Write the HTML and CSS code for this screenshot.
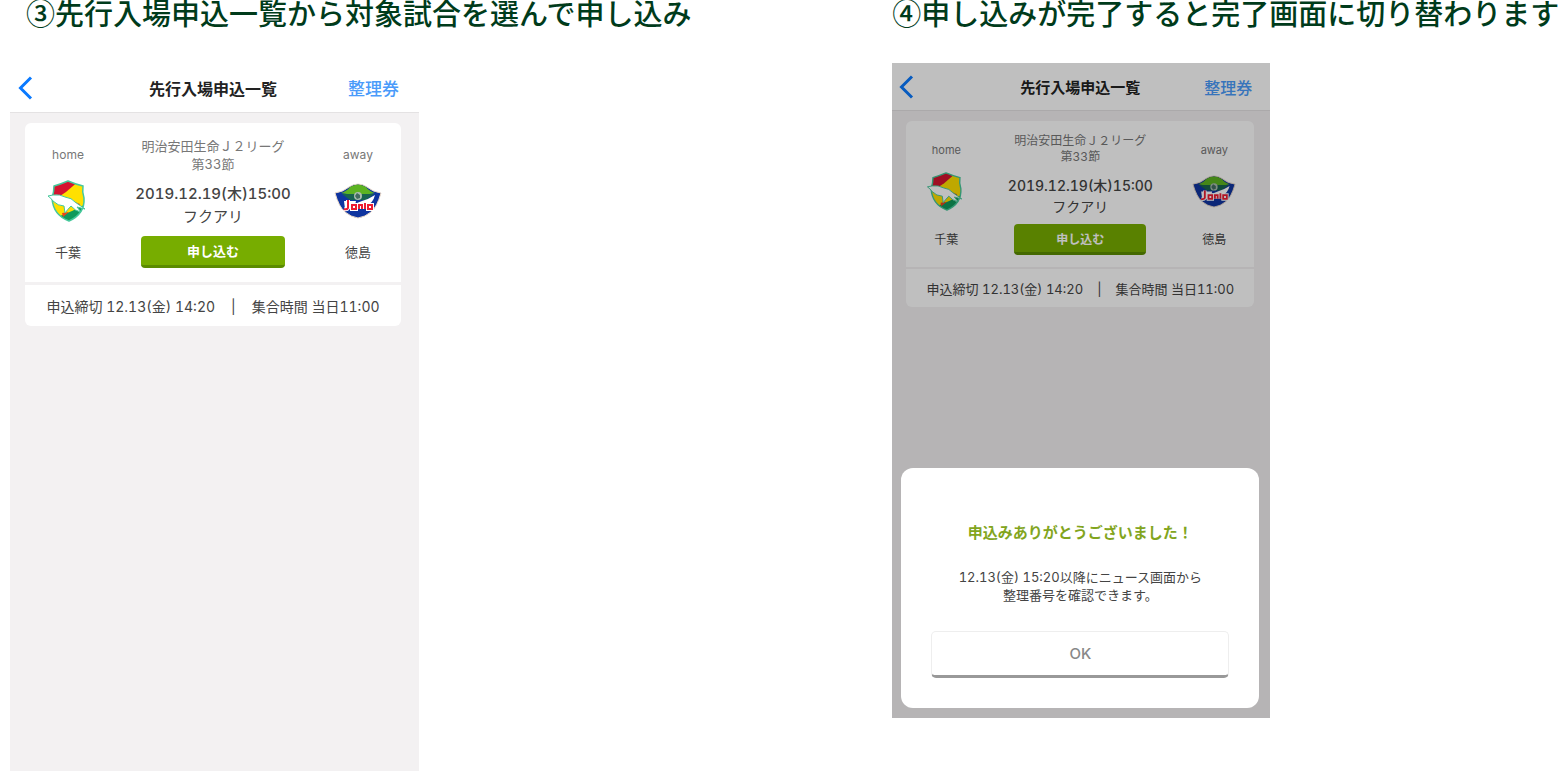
FILE: index.html
```
<!DOCTYPE html>
<html lang="ja">
  <head>
    <meta charset="UTF-8" />
    <meta name="viewport" content="width=device-width, initial-scale=1.0" />
    <title>先行入場申込</title>
    <link rel="stylesheet" href="styles.css" />
  </head>
  <body>
    <!-- shared icons -->
    <svg class="sprite" aria-hidden="true">
      <symbol id="icon-back" viewBox="0 0 16 26">
        <path d="M14 2.500 3.500 13 14 23.500" fill="none" stroke="#0a7aff" stroke-width="3" />
      </symbol>
      <symbol id="emblem-chiba" viewBox="0 0 40 42">
        <clipPath id="chiba-shield">
          <path d="M6 6Q13 4 20 1q7 3 15 5-1 6 1 12 1 16-15 23Q5 35 4 18q2-6 2-12z" />
        </clipPath>
        <g clip-path="url(#chiba-shield)">
          <path d="M0 0h40v42H0z" fill="#ffe000" />
          <path d="M0 0h32L18 12 9 18H0z" fill="#d5132f" />
          <path d="M12 36 24 31l16-8v19H10z" fill="#109a5c" />
          <path d="M27 22l5 2-2 4zM14 33l7-1-6 5z" fill="#e8441f" />
        </g>
        <path d="M6 6Q13 4 20 1q7 3 15 5-1 6 1 12 1 16-15 23Q5 35 4 18q2-6 2-12z" fill="none" stroke="#45c89b" stroke-width="1.500" />
        <path d="M0 16l5-1q7-1 12 2 7 1 10 5l10 7-8-2 4 5q-6-1-10-6-3 3-6 7l-1-7q-6 0-11-5-2-3-5-5z" fill="#fff" stroke="#45c89b" />
      </symbol>
      <symbol id="emblem-tokushima" viewBox="0 0 48 36">
        <path d="M1 10q8-1 14-6 9-6 18 0 6 5 14 6-4 14-10 19-6 5-13 6-7-1-13-6Q5 24 1 10z" fill="#0f35a0" stroke="#ead9c8" />
        <path d="M7 10q6-2 9-6 8-5 16 0 3 4 9 6-16 4-34 0z" fill="#5cb321" />
        <path d="M8 11h32l-8 6H16z" fill="#17634f" />
        <path d="M28 18q7-2 13-6-2 8-8 10H18z" fill="#fff" />
        <path d="M10 18h12l-2 8H11z" fill="#fff" />
        <circle cx="24" cy="13" r="4" fill="#a9bbae" />
        <path d="M23 10l3 2v3l-3 1-2-3z" fill="#426b60" />
        <path d="M14 17v8q-1 2-4 1M18 26v-4h4v4zm7 0v-4h3v4m3-6v6m3 0v-4h4v4z" fill="none" stroke="#fff" stroke-width="4" />
        <path d="M14 17v8q-1 2-4 1M18 26v-4h4v4zm7 0v-4h3v4m3-6v6m3 0v-4h4v4z" fill="none" stroke="#ed1c32" stroke-width="2" />
      </symbol>
    </svg>

    <main class="steps">
      <section class="step">
        <h2>③先行入場申込一覧から対象試合を選んで申し込み</h2>
        <div class="phone">
          <header class="navbar">
            <button type="button" class="back" aria-label="戻る">
              <svg><use href="#icon-back" /></svg>
            </button>
            <h3>先行入場申込一覧</h3>
            <a href="#ticket">整理券</a>
          </header>
          <article class="card">
            <div class="match">
              <div class="team">
                <span class="side">home</span>
                <svg class="emblem"><use href="#emblem-chiba" /></svg>
                <span class="name">千葉</span>
              </div>
              <div class="info">
                <p class="league">明治安田生命Ｊ２リーグ<br />第33節</p>
                <p class="date">2019.12.19(木)15:00</p>
                <p class="venue">フクアリ</p>
                <button type="button" class="apply">申し込む</button>
              </div>
              <div class="team">
                <span class="side">away</span>
                <svg class="emblem"><use href="#emblem-tokushima" /></svg>
                <span class="name">徳島</span>
              </div>
            </div>
            <footer class="deadline">
              <span>申込締切 12.13(金) 14:20</span>
              <span>|</span>
              <span>集合時間 当日11:00</span>
            </footer>
          </article>
        </div>
      </section>

      <section class="step">
        <h2>④申し込みが完了すると完了画面に切り替わります</h2>
        <div class="phone phone-small">
          <header class="navbar">
            <button type="button" class="back" aria-label="戻る">
              <svg><use href="#icon-back" /></svg>
            </button>
            <h3>先行入場申込一覧</h3>
            <a href="#ticket">整理券</a>
          </header>
          <article class="card">
            <div class="match">
              <div class="team">
                <span class="side">home</span>
                <svg class="emblem"><use href="#emblem-chiba" /></svg>
                <span class="name">千葉</span>
              </div>
              <div class="info">
                <p class="league">明治安田生命Ｊ２リーグ<br />第33節</p>
                <p class="date">2019.12.19(木)15:00</p>
                <p class="venue">フクアリ</p>
                <button type="button" class="apply">申し込む</button>
              </div>
              <div class="team">
                <span class="side">away</span>
                <svg class="emblem"><use href="#emblem-tokushima" /></svg>
                <span class="name">徳島</span>
              </div>
            </div>
            <footer class="deadline">
              <span>申込締切 12.13(金) 14:20</span>
              <span>|</span>
              <span>集合時間 当日11:00</span>
            </footer>
          </article>

          <div class="overlay">
            <div class="dialog" role="dialog" aria-labelledby="dialogTitle">
              <h4 id="dialogTitle">申込みありがとうございました！</h4>
              <p>12.13(金) 15:20以降にニュース画面から<br />整理番号を確認できます。</p>
              <button type="button" class="ok">OK</button>
            </div>
          </div>
        </div>
      </section>
    </main>
  </body>
</html>
```

FILE: styles.css
```
* {
  box-sizing: border-box;
}

body {
  margin: 0;
  background: #fff;
  color: #444;
  font-family: Inter, "Noto Sans CJK JP", sans-serif;
  font-variant-numeric: tabular-nums;
}

h2,
h3,
h4,
p {
  margin: 0;
}

button {
  font-family: inherit;
  cursor: pointer;
}

.sprite {
  position: absolute;
  width: 0;
  height: 0;
}

.steps {
  display: grid;
  grid-template-columns: 57fr 43fr;
  padding-left: 10px;
}

.step {
  min-width: 0;
}

.step h2 {
  height: 63px;
  padding-left: 16px;
  color: #003b1b;
  font-family: "Noto Sans CJK JP", sans-serif;
  font-size: 29px;
  font-weight: 500;
  line-height: 24px;
  white-space: nowrap;
}

.step + .step h2 {
  padding-left: 0;
}

.phone {
  position: relative;
  width: 100%;
  max-width: 409px;
  min-height: 708px;
  background: #f3f1f2;
}

.navbar {
  display: grid;
  grid-template-columns: 80px 1fr 70px;
  align-items: center;
  height: 50px;
  padding: 0 20px 0 7px;
  border-bottom: 1px solid #e4e2e3;
  background: #fff;
}

.navbar h3 {
  color: #222;
  font-size: 16px;
  font-weight: 700;
  text-align: center;
}

.navbar a {
  color: #4a9bfa;
  font-size: 17px;
  font-weight: 500;
  text-align: right;
  text-decoration: none;
}

.back {
  width: 16px;
  height: 26px;
  padding: 0;
  border: none;
  background: none;
}

.back svg {
  display: block;
  width: 16px;
  height: 26px;
}

.card {
  margin: 10px 18px 0 15px;
  border-radius: 6px;
  background: #fff;
}

.match {
  display: grid;
  grid-template-columns: 86px 1fr 86px;
  height: 162px;
  border-bottom: 3px solid #f3f1f2;
}

.team {
  display: flex;
  flex-direction: column;
  align-items: center;
  padding-top: 24px;
}

.side {
  color: #777;
  font-size: 12px;
  line-height: 16px;
}

.emblem {
  width: 48px;
  height: 42px;
  margin: 17px 0 21px;
}

.name {
  font-size: 13px;
  line-height: 18px;
}

.info {
  display: flex;
  flex-direction: column;
  align-items: center;
  padding-top: 14px;
  white-space: nowrap;
}

.league {
  color: #777;
  font-size: 13px;
  line-height: 18px;
  text-align: center;
}

.date {
  margin-top: 9px;
  font-size: 15px;
  font-weight: 500;
  line-height: 24px;
}

.venue {
  font-size: 15px;
  line-height: 22px;
}

.apply {
  width: 144px;
  height: 32px;
  margin-top: 8px;
  padding: 0;
  border: none;
  border-bottom: 3px solid #5b8c00;
  border-radius: 4px;
  background: #77ad00;
  color: #fff;
  font-size: 13px;
  font-weight: 700;
}

.deadline {
  display: flex;
  justify-content: center;
  gap: 16px;
  padding: 12px 0 9px;
  font-size: 14px;
  line-height: 20px;
  white-space: nowrap;
}

/* smaller phone on the right */
.phone-small {
  max-width: 378px;
  min-height: 655px;
}

.phone-small .navbar {
  height: 48px;
  padding: 0 18px 0 6px;
}

.phone-small .navbar h3 {
  font-size: 15px;
}

.phone-small .navbar a {
  font-size: 16px;
}

.phone-small .card {
  margin: 10px 16px 0 14px;
}

.phone-small .match {
  grid-template-columns: 80px 1fr 80px;
  height: 148px;
  border-bottom-width: 2px;
}

.phone-small .team {
  padding-top: 21px;
}

.phone-small .side {
  font-size: 11px;
}

.phone-small .emblem {
  width: 44px;
  height: 39px;
  margin: 14px 0 20px;
}

.phone-small .name {
  font-size: 12px;
}

.phone-small .info {
  padding-top: 12px;
}

.phone-small .league {
  font-size: 12px;
  line-height: 16px;
}

.phone-small .date {
  margin-top: 10px;
  font-size: 14px;
  line-height: 22px;
}

.phone-small .venue {
  font-size: 14px;
  line-height: 20px;
}

.phone-small .apply {
  width: 132px;
  height: 31px;
  margin-top: 7px;
  font-size: 12px;
}

.phone-small .deadline {
  gap: 14px;
  padding: 10px 0 8px;
  font-size: 13px;
}

.overlay {
  position: absolute;
  inset: 0;
  display: flex;
  align-items: flex-end;
  padding: 10px 11px 10px 9px;
  background: rgba(0, 0, 0, 0.25);
}

.dialog {
  width: 100%;
  padding: 54px 30px 30px;
  border-radius: 12px;
  background: #fff;
  text-align: center;
}

.dialog h4 {
  color: #82a51e;
  font-size: 15px;
  font-weight: 700;
  line-height: 22px;
}

.dialog p {
  margin-top: 24px;
  font-size: 13px;
  line-height: 18px;
  white-space: nowrap;
}

.ok {
  width: 100%;
  height: 47px;
  margin-top: 27px;
  border: 1px solid #eee;
  border-bottom: 3px solid #999;
  border-radius: 5px;
  background: #fff;
  color: #888;
  font-size: 15px;
  font-weight: 500;
}
```
